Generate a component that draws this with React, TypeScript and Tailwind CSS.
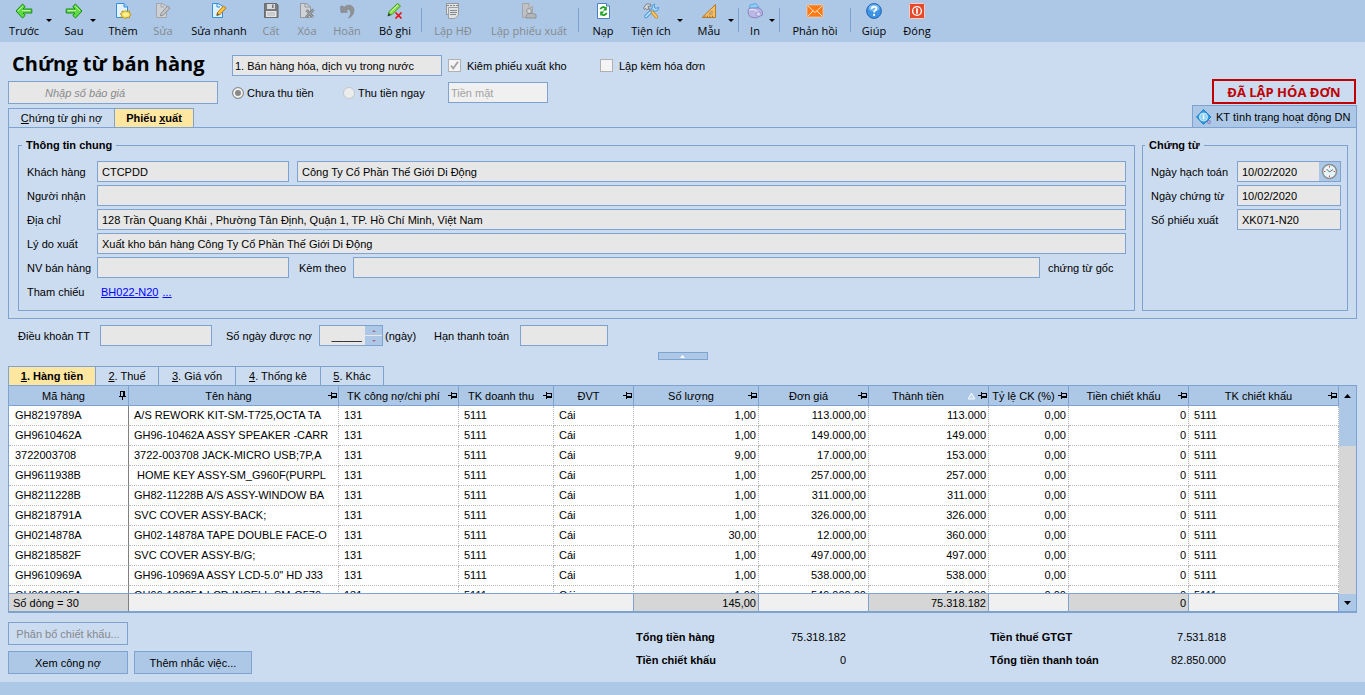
import type { ReactNode } from 'react'

type ToolItem =
  | { kind: 'button'; label: string; icon: ReactNode; width: string; disabled?: boolean }
  | { kind: 'caret'; label: string; width: string }
  | { kind: 'sep' }

type Column = {
  label: string
  width: string
  right?: boolean
  sorted?: boolean
}

function Icon({ children }: { children: ReactNode }) {
  return (
    <svg width="18" height="18" viewBox="0 0 18 18" aria-hidden="true">
      {children}
    </svg>
  )
}

const arrowPath = 'M1 9 L7.5 2 L10.2 4.6 L8 7 H16.8 V11 H8 L10.2 13.4 L7.5 16 Z'

const BackIcon = (
  <Icon>
    <path d={arrowPath} fill="#5fdc3f" stroke="#168a1b" strokeWidth="1" strokeLinejoin="round" />
    <path d="M3 9 L7.5 4.4 M7 8.6 H15.5" stroke="#c9fbb0" strokeWidth="1" fill="none" />
  </Icon>
)

const ForwardIcon = (
  <Icon>
    <g transform="matrix(-1 0 0 1 18 0)">
      <path d={arrowPath} fill="#5fdc3f" stroke="#168a1b" strokeWidth="1" strokeLinejoin="round" />
      <path d="M3 9 L7.5 4.4 M7 8.6 H15.5" stroke="#c9fbb0" strokeWidth="1" fill="none" />
    </g>
  </Icon>
)

const AddIcon = (
  <Icon>
    <path d="M2.5 1.5 H10 L13.5 5 V15.5 H2.5 Z" fill="#e4f3fd" stroke="#2f8fdb" />
    <path d="M10 1.5 V5 H13.5" fill="#9fd2f5" stroke="#2f8fdb" />
    <path d="M11.5 8.5 L13 9.4 L15.5 9 L15.4 11 L17.3 12.5 L15.4 14 L15.4 16 L12.8 15.6 L11 16.8 L9.6 15.4 L7 15.4 L7.8 13.2 L6.2 12 L8 10.8 L8 9 L10.3 9.4 Z" fill="#f2d64b" stroke="#b58a1a" strokeWidth="0.8" />
    <ellipse cx="11.8" cy="12.6" rx="3.2" ry="2.2" fill="#fff08c" />
  </Icon>
)

const EditOffIcon = (
  <Icon>
    <path d="M2.5 1.5 H8 L12.5 4 V15.5 H2.5 Z" fill="#cdd0d4" stroke="#a2a5a9" />
    <path d="M7 1.5 V5 H10" fill="none" stroke="#a2a5a9" />
    <path d="M7 11.5 L13.5 4 L16 6 L9.5 13 L6.5 13.8 Z" fill="#c3c5c8" stroke="#8b8e92" />
  </Icon>
)

const EditIcon = (
  <Icon>
    <path d="M2.5 1.5 H8 L12.5 4 V15.5 H2.5 Z" fill="#dff1fd" stroke="#2f8fdb" />
    <path d="M7 1.5 V5 H10" fill="none" stroke="#2f8fdb" />
    <path d="M7 11 L13.5 4 L16 6 L9.5 13 Z" fill="#ffc440" stroke="#b87512" />
    <path d="M7 11 L9.5 13 L6.3 13.9 Z" fill="#6b4a1d" />
  </Icon>
)

const SaveIcon = (
  <Icon>
    <path d="M2.5 1.5 H14.5 L16 3 V15.5 H2.5 Z" fill="#77797d" stroke="#696b6f" />
    <rect x="5" y="2" width="8" height="5" fill="#d8dadd" />
    <rect x="10" y="2.5" width="1.6" height="3.5" fill="#77797d" />
    <rect x="4" y="9" width="10.5" height="6" fill="#e3e5e7" />
    <path d="M5 11 H13 M5 13 H13" stroke="#a4a7aa" strokeWidth="0.8" />
  </Icon>
)

const DeleteIcon = (
  <Icon>
    <path d="M2.5 1.5 H8 L12.5 4.5 V15.5 H2.5 Z" fill="#cfd2d6" stroke="#96999d" />
    <path d="M7 1.5 V5 H12" fill="none" stroke="#96999d" />
    <path d="M8.5 8 L15 15 M15.5 7.5 L8 15.5" stroke="#7b7e82" strokeWidth="2.6" />
    <path d="M8.5 8 L15 15 M15.5 7.5 L8 15.5" stroke="#b6b9bd" strokeWidth="0.9" />
  </Icon>
)

const UndoIcon = (
  <Icon>
    <path d="M2.5 4.5 L5 4 L6 5.6 C9.5 1.2 16.2 3 16 8.6 C15.8 12.4 13.5 15 10.5 16 C12.6 13.4 13.2 11 12.4 9 C11.5 7 9.5 7 8.2 8.2 L9.6 10.2 L3 10.6 Z" fill="#909296" stroke="#7c7f83" strokeWidth="0.6" />
  </Icon>
)

const UnpostIcon = (
  <Icon>
    <path d="M2 13.5 L3.2 9.5 L11.5 1.5 L14.5 4 L6 12.5 Z" fill="#8be04a" stroke="#3d9c1f" />
    <path d="M4.5 10 L12 3" stroke="#dcfbb8" strokeWidth="1" />
    <path d="M1.5 14.5 L2.8 11 L4.8 13 Z" fill="#333" />
    <path d="M9.5 10.5 L15.5 16.5 M15.5 10.5 L9.5 16.5" stroke="#e81010" strokeWidth="1.7" />
  </Icon>
)

const InvoiceIcon = (
  <Icon>
    <rect x="2.5" y="1.5" width="12" height="11" fill="#e2e3e5" stroke="#94979b" />
    <path d="M3 3.5 H14" stroke="#808387" strokeDasharray="2 1" />
    <path d="M4.5 5.5 H14.5 V13 L11 16.5 H4.5 Z" fill="#e0e1e3" stroke="#9b9ea2" />
    <path d="M6 8.5 H13 M6 10.5 H13 M6 12.5 H12" stroke="#85888c" />
  </Icon>
)

const StockOutIcon = (
  <Icon>
    <path d="M2.5 1.5 H9 L12.5 5 V15.5 H2.5 Z" fill="#bfc1c4" stroke="#a2a5a9" />
    <path d="M9 1.5 V5 H12.5" fill="#dfe1e3" stroke="#9a9da1" />
    <circle cx="9" cy="9" r="2.4" fill="#d4d6d9" stroke="#909397" />
    <path d="M6 16 V13.5 Q9 10 16 12.5 V16 Z" fill="#b4b7ba" stroke="#909397" />
  </Icon>
)

const ReloadIcon = (
  <Icon>
    <path d="M3.5 1.5 H12.5 L15.5 4 V16.5 H3.5 Z" fill="#fff" stroke="#4d7fc4" />
    <path d="M12.5 1.5 V4 H15.5" fill="#b7d2f2" stroke="#4d7fc4" />
    <path d="M6.2 7 Q9 3.8 11.5 6" stroke="#16a321" strokeWidth="1.8" fill="none" />
    <path d="M12.8 4.3 V8.6 H8.8 Z" fill="#16a321" />
    <path d="M12.8 11.2 Q10 14.4 7.5 12.2" stroke="#16a321" strokeWidth="1.8" fill="none" />
    <path d="M6.2 13.9 V9.6 H10.2 Z" fill="#16a321" />
  </Icon>
)

const ToolsIcon = (
  <Icon>
    <path d="M4 14.5 L12 6.5" stroke="#2f8ad6" strokeWidth="3.4" strokeLinecap="round" />
    <path d="M4 14.5 L12 6.5" stroke="#b5defb" strokeWidth="1.8" strokeLinecap="round" />
    <path d="M12.5 2 L12 5 L13.5 6.5 L16.6 5.5 L15.8 8.4 L12.6 9.2 L10 6.4 L10.3 3.4 Z" fill="#b5defb" stroke="#2f8ad6" strokeWidth="0.8" />
    <path d="M6 6 L9.5 9.5" stroke="#8b8f94" strokeWidth="1.6" />
    <path d="M10.5 10.5 L14.5 14.8" stroke="#c78423" strokeWidth="3.4" strokeLinecap="round" />
    <path d="M10.5 10.5 L14.5 14.8" stroke="#ffcf6b" strokeWidth="1.8" strokeLinecap="round" />
    <path d="M1.5 6 L4.5 2 L8.5 2 L9 4 L6 4.5 L6.8 6.5 L4.8 7.8 L3.6 6.4 L2.4 7.4 Z" fill="#d5d8db" stroke="#6a6e73" strokeWidth="0.8" />
  </Icon>
)

const TemplateIcon = (
  <Icon>
    <path d="M15.5 2.5 V15.5 H2 Z" fill="#f3bf68" stroke="#b5792a" />
    <path d="M12 8.8 V12 H8.8 Z" fill="#cfe0f3" stroke="#b5792a" strokeWidth="0.8" />
    <path d="M5 15 V13.6 M7.5 15 V13.6 M10 15 V13.6 M12.5 15 V13.6" stroke="#8b5110" strokeWidth="0.7" />
  </Icon>
)

const PrintIcon = (
  <Icon>
    <path d="M3.5 6.5 L4 3 L10 1.5 L13 6 Z" fill="#8fd0f8" stroke="#4a9edc" strokeWidth="0.8" />
    <path d="M2 8 Q2.5 6 5 6 L13 6 Q16.5 7.5 16.5 10.5 V13 L10 16 L4.5 15 Q1.5 13 2 8 Z" fill="#bab7e4" stroke="#7b78b8" strokeWidth="0.8" />
    <path d="M3 8 Q8 6 12 10" stroke="#e4e2fa" strokeWidth="1.2" fill="none" />
    <ellipse cx="12.5" cy="12" rx="2.6" ry="2.2" fill="#d6d4f2" stroke="#8a87c4" strokeWidth="0.7" />
  </Icon>
)

const MailIcon = (
  <Icon>
    <rect x="1" y="3" width="16" height="12" fill="#ff7a14" stroke="#ffd9b5" strokeWidth="0.6" />
    <path d="M2 4 L9 10.5 L16 4 M2 14 L7 9 M16 14 L11 9" stroke="#ffe6d0" strokeWidth="1" fill="none" />
  </Icon>
)

const HelpIcon = (
  <Icon>
    <circle cx="9" cy="9" r="7.4" fill="#3d93e6" stroke="#1b5cab" strokeWidth="0.9" />
    <ellipse cx="9" cy="6" rx="5.4" ry="3.6" fill="#7dbbf3" />
    <path d="M6.6 7 Q6.8 4.6 9.1 4.6 Q11.5 4.7 11.4 6.8 Q11.2 8 9.9 8.7 Q9.1 9.2 9.1 10.6" stroke="#fff" strokeWidth="1.7" fill="none" />
    <circle cx="9.1" cy="12.9" r="1.1" fill="#fff" />
  </Icon>
)

const CloseIcon = (
  <Icon>
    <rect x="1.5" y="1.5" width="15" height="15" rx="1" fill="#e5482a" stroke="#f6cfc2" />
    <circle cx="9" cy="9" r="4.4" fill="none" stroke="#fff" strokeWidth="1.4" />
    <path d="M9 6.2 V11.8" stroke="#fff" strokeWidth="1.7" />
  </Icon>
)

const toolbar: ToolItem[] = [
  { kind: 'button', label: 'Trước', icon: BackIcon, width: 'w-[44px]' },
  { kind: 'caret', label: 'Trước', width: 'w-[12px]' },
  { kind: 'button', label: 'Sau', icon: ForwardIcon, width: 'w-[32px]' },
  { kind: 'caret', label: 'Sau', width: 'w-[17px]' },
  { kind: 'button', label: 'Thêm', icon: AddIcon, width: 'w-[32px]' },
  { kind: 'button', label: 'Sửa', icon: EditOffIcon, width: 'w-[48px]', disabled: true },
  { kind: 'button', label: 'Sửa nhanh', icon: EditIcon, width: 'w-[64px]' },
  { kind: 'button', label: 'Cất', icon: SaveIcon, width: 'w-[40px]', disabled: true },
  { kind: 'button', label: 'Xóa', icon: DeleteIcon, width: 'w-[32px]', disabled: true },
  { kind: 'button', label: 'Hoãn', icon: UndoIcon, width: 'w-[48px]', disabled: true },
  { kind: 'button', label: 'Bỏ ghi', icon: UnpostIcon, width: 'w-[48px]' },
  { kind: 'sep' },
  { kind: 'button', label: 'Lập HĐ', icon: InvoiceIcon, width: 'w-[58px]', disabled: true },
  { kind: 'button', label: 'Lập phiếu xuất', icon: StockOutIcon, width: 'w-[94px]', disabled: true },
  { kind: 'sep' },
  { kind: 'button', label: 'Nạp', icon: ReloadIcon, width: 'w-[44px]' },
  { kind: 'button', label: 'Tiện ích', icon: ToolsIcon, width: 'w-[52px]' },
  { kind: 'caret', label: 'Tiện ích', width: 'w-[13px]' },
  { kind: 'button', label: 'Mẫu', icon: TemplateIcon, width: 'w-[38px]' },
  { kind: 'caret', label: 'Mẫu', width: 'w-[8px]' },
  { kind: 'sep' },
  { kind: 'button', label: 'In', icon: PrintIcon, width: 'w-[28px]' },
  { kind: 'caret', label: 'In', width: 'w-[8px]' },
  { kind: 'sep' },
  { kind: 'button', label: 'Phản hồi', icon: MailIcon, width: 'w-[66px]' },
  { kind: 'sep' },
  { kind: 'button', label: 'Giúp', icon: HelpIcon, width: 'w-[42px]' },
  { kind: 'button', label: 'Đóng', icon: CloseIcon, width: 'w-[44px]' },
]

const columns: Column[] = [
  { label: 'Mã hàng', width: 'w-[120px]' },
  { label: 'Tên hàng', width: 'w-[210px]' },
  { label: 'TK công nợ/chi phí', width: 'w-[120px]' },
  { label: 'TK doanh thu', width: 'w-[95px]' },
  { label: 'ĐVT', width: 'w-[80px]' },
  { label: 'Số lượng', width: 'w-[125px]', right: true },
  { label: 'Đơn giá', width: 'w-[110px]', right: true },
  { label: 'Thành tiền', width: 'w-[120px]', right: true, sorted: true },
  { label: 'Tỷ lệ CK (%)', width: 'w-[80px]', right: true },
  { label: 'Tiền chiết khấu', width: 'w-[120px]', right: true },
  { label: 'TK chiết khấu', width: 'w-auto' },
]

// code, name, quantity, unit price, amount
const items: string[][] = [
  ['GH8219789A', 'A/S REWORK KIT-SM-T725,OCTA TA', '1,00', '113.000,00', '113.000'],
  ['GH9610462A', 'GH96-10462A ASSY SPEAKER -CARR', '1,00', '149.000,00', '149.000'],
  ['3722003708', '3722-003708 JACK-MICRO USB;7P,A', '9,00', '17.000,00', '153.000'],
  ['GH9611938B', ' HOME KEY ASSY-SM_G960F(PURPL', '1,00', '257.000,00', '257.000'],
  ['GH8211228B', 'GH82-11228B A/S ASSY-WINDOW BA', '1,00', '311.000,00', '311.000'],
  ['GH8218791A', 'SVC COVER ASSY-BACK;', '1,00', '326.000,00', '326.000'],
  ['GH0214878A', 'GH02-14878A TAPE DOUBLE FACE-O', '30,00', '12.000,00', '360.000'],
  ['GH8218582F', 'SVC COVER ASSY-B/G;', '1,00', '497.000,00', '497.000'],
  ['GH9610969A', 'GH96-10969A ASSY LCD-5.0" HD J33', '1,00', '538.000,00', '538.000'],
  ['GH9610225A', 'GH96-10225A LCD INCELL-SM-G570', '1,00', '549.000,00', '549.000'],
]

const totals = ['Số dòng = 30', '', '', '', '', '145,00', '', '75.318.182', '', '0', '']

const detailTabs = ['Hàng tiền', 'Thuế', 'Giá vốn', 'Thống kê', 'Khác']
const detailTabWidths = ['w-[87px]', 'w-[63px]', 'w-[77px]', 'w-[85px]', 'w-[63px]']

function Field({ id, value = '', className = '' }: { id: string; value?: string; className?: string }) {
  return (
    <input
      id={id}
      type="text"
      defaultValue={value}
      readOnly
      className={`h-[21px] min-w-0 border border-[#7ea3d0] bg-[#e7e7e7] px-1 text-black outline-none ${className}`}
    />
  )
}

function Cols() {
  return (
    <colgroup>
      {columns.map((column) => (
        <col key={column.label} className={column.width} />
      ))}
    </colgroup>
  )
}

function Pin({ vertical }: { vertical?: boolean }) {
  return (
    <svg
      width="9"
      height="9"
      viewBox="0 0 9 9"
      shapeRendering="crispEdges"
      aria-hidden="true"
      className={vertical ? 'shrink-0 -rotate-90' : 'shrink-0'}
    >
      <path d="M0 4h3v1H0z M3 1h1v7H3z M4 2h5v1H4z M4 5h5v2H4z M8 2h1v4H8z" fill="#000" />
    </svg>
  )
}

function Toolbar() {
  return (
    <nav className="flex h-[42px] shrink-0 bg-[#adc8e6] pl-[2px] font-['Open_Sans','Noto_Sans',sans-serif]">
      {toolbar.map((item, i) => {
        if (item.kind === 'sep') {
          return <span key={i} className="mx-[2px] mt-2 h-6 w-px bg-[#7ea3d0]" />
        }
        if (item.kind === 'caret') {
          return (
            <button key={i} type="button" aria-label={`${item.label}, tùy chọn`} className={`${item.width} flex h-10 items-center`}>
              <svg width="6" height="3" viewBox="0 0 6 3" aria-hidden="true">
                <path d="M0 0 H6 L3 3 Z" fill="#000" />
              </svg>
            </button>
          )
        }
        return (
          <button
            key={i}
            type="button"
            disabled={item.disabled}
            className={`${item.width} flex flex-col items-center whitespace-nowrap pt-[2px] disabled:text-[#84888e]`}
          >
            {item.icon}
            <span className="mt-[3px] leading-4">{item.label}</span>
          </button>
        )
      })}
    </nav>
  )
}

function Header() {
  return (
    <header className="flex shrink-0 justify-between pl-2 pr-[9px]">
      <div>
        <div className="flex h-[39px] items-end pb-[5px]">
          <h1 className="w-[224px] whitespace-nowrap pl-1 font-['Open_Sans','Noto_Sans',sans-serif] text-xl font-bold leading-6">
            Chứng từ bán hàng
          </h1>
          <select
            aria-label="Loại chứng từ"
            className="h-[21px] w-[210px] appearance-none border border-[#7ea3d0] bg-[#e7e7e7] pl-[2px] outline-none"
          >
            <option>1. Bán hàng hóa, dịch vụ trong nước</option>
          </select>
          <label className="ml-[6px] flex h-[21px] w-[152px] items-center gap-[6px]">
            <input
              type="checkbox"
              defaultChecked
              className="size-[13px] appearance-none border border-[#b0b0b0] bg-[#f4f4f4]"
            />
            <svg width="9" height="9" viewBox="0 0 9 9" aria-hidden="true" className="-ml-[17px] mr-[2px]">
              <path d="M1 4.5 L3.2 7.5 L8 0.8" stroke="#a3a3a3" strokeWidth="1.8" fill="none" />
            </svg>
            Kiêm phiếu xuất kho
          </label>
          <label className="flex h-[21px] items-center gap-[6px]">
            <input type="checkbox" className="size-[13px] appearance-none border border-[#b0b0b0] bg-[#f4f4f4]" />
            Lập kèm hóa đơn
          </label>
        </div>
        <div className="flex h-6 items-start">
          <input
            type="text"
            aria-label="Số báo giá"
            placeholder="Nhập số báo giá"
            className="h-[23px] w-[210px] border border-[#7ea3d0] bg-[#e7e7e7] pl-9 italic outline-none placeholder:text-[#8a8a8a]"
          />
          <label className="ml-[14px] flex h-[23px] w-[111px] items-center gap-[3px]">
            <input
              type="radio"
              name="payment"
              defaultChecked
              className="size-3 appearance-none rounded-full border border-[#8e8f8f] bg-[#8a8a8a] shadow-[inset_0_0_0_2px_#f0f0f0]"
            />
            Chưa thu tiền
          </label>
          <label className="flex h-[23px] w-[105px] items-center gap-[3px]">
            <input type="radio" name="payment" className="size-3 appearance-none rounded-full border border-[#c4c6c8] bg-[#ececec]" />
            Thu tiền ngay
          </label>
          <input
            type="text"
            aria-label="Phương thức thanh toán"
            defaultValue="Tiền mặt"
            disabled
            className="mt-px h-[21px] w-[100px] border border-[#7ea3d0] bg-[#f0f0f0] px-[2px] text-[#a3a3a3]"
          />
        </div>
      </div>
      <div className="flex flex-col justify-end pb-px">
        <strong className="flex h-[25px] w-[144px] items-center justify-center border-2 border-[#c00000] font-['Open_Sans','Noto_Sans',sans-serif] text-[13px] font-bold text-[#c00000]">
          ĐÃ LẬP HÓA ĐƠN
        </strong>
      </div>
    </header>
  )
}

function GeneralInfo() {
  return (
    <fieldset className="h-[173px] min-w-0 flex-1 border border-[#7ea3d0] px-2 pt-2">
      <legend className="-ml-[5px] h-[15px] px-1 font-bold leading-[15px]">Thông tin chung</legend>
      <div className="flex flex-col gap-[3px]">
        <div className="flex items-center">
          <label htmlFor="customer" className="w-[70px]">Khách hàng</label>
          <Field id="customer" value="CTCPDD" className="w-[192px]" />
          <input
            type="text"
            aria-label="Tên khách hàng"
            defaultValue="Công Ty Cổ Phần Thế Giới Di Động"
            readOnly
            className="ml-2 h-[21px] min-w-0 flex-1 border border-[#7ea3d0] bg-[#e7e7e7] px-1 outline-none"
          />
        </div>
        <div className="flex items-center">
          <label htmlFor="receiver" className="w-[70px]">Người nhận</label>
          <Field id="receiver" className="flex-1" />
        </div>
        <div className="flex items-center">
          <label htmlFor="address" className="w-[70px]">Địa chỉ</label>
          <Field id="address" className="flex-1" value="128 Trần Quang Khải , Phường Tân Định, Quận 1, TP. Hồ Chí Minh, Việt Nam" />
        </div>
        <div className="flex items-center">
          <label htmlFor="reason" className="w-[70px]">Lý do xuất</label>
          <Field id="reason" className="flex-1" value="Xuất kho bán hàng Công Ty Cổ Phần Thế Giới Di Động" />
        </div>
        <div className="flex items-center">
          <label htmlFor="seller" className="w-[70px] whitespace-nowrap">NV bán hàng</label>
          <Field id="seller" className="w-[192px]" />
          <label htmlFor="attached" className="ml-[10px] w-[54px]">Kèm theo</label>
          <Field id="attached" className="flex-1" />
          <span className="w-[86px] pl-2">chứng từ gốc</span>
        </div>
        <div className="flex h-[21px] items-center">
          <span className="w-[74px]">Tham chiếu</span>
          <a href="#BH022-N20" className="text-[#0000ff] underline">BH022-N20</a>
          <a href="#more" className="ml-1 text-[#0000ff] underline">...</a>
        </div>
      </div>
    </fieldset>
  )
}

function VoucherInfo() {
  return (
    <fieldset className="h-[173px] w-[206px] min-w-0 shrink-0 border border-[#7ea3d0] pl-2 pr-[6px] pt-2">
      <legend className="-ml-[6px] h-[15px] px-1 font-bold leading-[15px]">Chứng từ</legend>
      <div className="flex flex-col gap-[3px]">
        <div className="flex items-center">
          <label htmlFor="postedDate" className="w-[86px] whitespace-nowrap">Ngày hạch toán</label>
          <div className="flex h-[21px] min-w-0 flex-1 border border-[#7ea3d0] bg-[#e7e7e7]">
            <input id="postedDate" type="text" defaultValue="10/02/2020" className="w-0 flex-1 pl-1 outline-none" />
            <button type="button" aria-label="Chọn giờ" className="flex w-[21px] items-center justify-center bg-[#adc8e6]">
              <svg width="17" height="17" viewBox="0 0 17 17" aria-hidden="true">
                <circle cx="8.5" cy="8.5" r="7" fill="#e6f5f7" stroke="#8b9093" strokeWidth="1.6" />
                <path d="M5.5 6 L8.5 9 L12 6.5" stroke="#5d6f78" strokeWidth="1" fill="none" />
                <path d="M8 3h1v1.4H8z M8 12.6h1V14H8z M3 8h1.4v1H3z M12.6 8H14v1h-1.4z" fill="#e0452c" />
              </svg>
            </button>
          </div>
        </div>
        <div className="flex items-center">
          <label htmlFor="voucherDate" className="w-[86px]">Ngày chứng từ</label>
          <Field id="voucherDate" value="10/02/2020" className="flex-1" />
        </div>
        <div className="flex items-center">
          <label htmlFor="voucherNo" className="w-[86px]">Số phiếu xuất</label>
          <Field id="voucherNo" value="XK071-N20" className="flex-1" />
        </div>
      </div>
    </fieldset>
  )
}

function PaymentTerms() {
  return (
    <div className="flex h-[33px] shrink-0 items-center pl-[18px]">
      <label htmlFor="terms" className="w-[82px]">Điều khoản TT</label>
      <Field id="terms" className="w-[112px]" />
      <label htmlFor="creditDays" className="ml-[14px] w-[93px]">Số ngày được nợ</label>
      <div className="flex h-[21px] w-[64px] border border-[#7ea3d0] bg-[#e7e7e7]">
        <input id="creditDays" type="text" defaultValue="_____" className="w-0 flex-1 pr-[3px] text-right outline-none" />
        <div className="flex w-[17px] flex-col gap-px">
          <button type="button" aria-label="Tăng" className="flex flex-1 items-center justify-center bg-[#adc8e6]">
            <svg width="4" height="2" viewBox="0 0 4 2" aria-hidden="true"><path d="M0 2 L2 0 L4 2 Z" fill="#a5718f" /></svg>
          </button>
          <button type="button" aria-label="Giảm" className="flex flex-1 items-center justify-center bg-[#adc8e6]">
            <svg width="4" height="2" viewBox="0 0 4 2" aria-hidden="true"><path d="M0 0 H4 L2 2 Z" fill="#a5718f" /></svg>
          </button>
        </div>
      </div>
      <span className="ml-[2px] w-[49px]">(ngày)</span>
      <label htmlFor="dueDate" className="w-[86px]">Hạn thanh toán</label>
      <Field id="dueDate" className="w-[88px]" />
    </div>
  )
}

function ItemsGrid() {
  return (
    <div className="flex min-h-0 flex-1 border border-b-2 border-[#7ea3d0]">
      <div className="flex min-w-0 flex-1 flex-col">
        <div className="min-h-0 flex-1 overflow-hidden bg-white">
          <table className="w-full table-fixed border-separate border-spacing-0">
            <Cols />
            <thead>
              <tr>
                {columns.map((column, i) => (
                  <th key={column.label} className="h-5 border-b border-r border-[#7ea3d0] bg-[#adc8e6] p-0 font-normal">
                    <div className="flex items-center pr-px">
                      <span className="flex-1 whitespace-nowrap text-center">{column.label}</span>
                      {column.sorted && (
                        <svg width="9" height="8" viewBox="0 0 9 8" aria-hidden="true" className="mr-[2px]">
                          <path d="M4.5 1 L8 7 H1 Z" fill="#c9daef" stroke="#f4f8fc" />
                        </svg>
                      )}
                      <Pin vertical={i === 0} />
                    </div>
                  </th>
                ))}
              </tr>
            </thead>
            <tbody>
              {items.map(([code, name, quantity, price, amount]) => {
                const cells = [code, name, '131', '5111', 'Cái', quantity, price, amount, '0,00', '0', '5111']
                return (
                  <tr key={code}>
                    {cells.map((cell, i) => (
                      <td
                        key={i}
                        className={`h-5 overflow-hidden whitespace-pre border-b border-r border-dotted border-[#b8b8b8] py-0 leading-[15px] ${
                          columns[i].right ? 'pl-1 pr-[2px] text-right' : i === 0 ? 'pl-[6px] pr-0' : 'pl-[5px] pr-0'
                        } ${i === 0 ? 'border-r-[#808080] [border-right-style:solid]' : ''}`}
                      >
                        {cell}
                      </td>
                    ))}
                  </tr>
                )
              })}
            </tbody>
          </table>
        </div>
        <table className="w-full shrink-0 table-fixed border-separate border-spacing-0 border-t border-[#7ea3d0]">
          <Cols />
          <tbody>
            <tr>
              {totals.map((total, i) => (
                <td
                  key={i}
                  className={`h-[17px] whitespace-nowrap border-r py-0 leading-4 ${
                    columns[i].right ? 'pl-1 pr-[2px] text-right' : 'pl-1 pr-0'
                  } ${total ? 'bg-[#d6d6d6]' : 'bg-[#f0f0f0]'} ${
                    i === 0 ? 'border-[#808080]' : i < 4 ? 'border-[#f0f0f0]' : 'border-[#7ea3d0]'
                  }`}
                >
                  {total}
                </td>
              ))}
            </tr>
          </tbody>
        </table>
      </div>
      <div className="flex w-[17px] flex-col bg-[#d6d6d6]">
        <button type="button" aria-label="Cuộn lên" className="flex h-5 items-center justify-center bg-[#adc8e6]">
          <svg width="7" height="4" viewBox="0 0 7 4" aria-hidden="true"><path d="M0 4 L3.5 0 L7 4 Z" fill="#000" /></svg>
        </button>
        <div className="h-10 bg-[#adc8e6]" />
        <div className="flex-1" />
        <button type="button" aria-label="Cuộn xuống" className="flex h-[17px] items-center justify-center bg-[#adc8e6]">
          <svg width="7" height="4" viewBox="0 0 7 4" aria-hidden="true"><path d="M0 0 H7 L3.5 4 Z" fill="#000" /></svg>
        </button>
      </div>
    </div>
  )
}

function Summary() {
  return (
    <footer className="flex h-[69px] shrink-0 items-start px-2 pt-[9px]">
      <div className="grid w-[628px] grid-cols-[120px_118px] gap-[6px]">
        <button type="button" disabled className="col-span-2 h-[23px] w-[120px] border border-[#7ea3d0] text-[#84888e]">
          Phân bổ chiết khấu...
        </button>
        <button type="button" className="h-[23px] border border-[#7ea3d0] bg-[#adc8e6]">Xem công nợ</button>
        <button type="button" className="h-[23px] border border-[#7ea3d0] bg-[#adc8e6]">Thêm nhắc việc...</button>
      </div>
      <dl className="grid grid-cols-[130px_80px_144px_130px_106px] gap-y-[7px] pt-[7px] leading-4">
        <dt className="font-bold">Tổng tiền hàng</dt>
        <dd className="text-right">75.318.182</dd>
        <dt className="col-start-4 font-bold">Tiền thuế GTGT</dt>
        <dd className="text-right">7.531.818</dd>
        <dt className="font-bold">Tiền chiết khấu</dt>
        <dd className="text-right">0</dd>
        <dt className="col-start-4 font-bold">Tổng tiền thanh toán</dt>
        <dd className="text-right">82.850.000</dd>
      </dl>
    </footer>
  )
}

export default function App() {
  return (
    <div className="flex h-screen flex-col bg-[#ccdcf0] font-['Liberation_Sans',Arial,sans-serif] text-[11px] leading-4 text-black">
      <Toolbar />
      <Header />

      <main className="flex min-h-0 flex-1 flex-col">
        <div className="flex h-[22px] shrink-0 items-end justify-between px-2">
          <div role="tablist" className="flex h-[19px] border-l border-t border-[#7ea3d0]">
            <button type="button" role="tab" aria-selected="false" className="w-[106px] border-r border-[#7ea3d0]">
              <u>C</u>hứng từ ghi nợ
            </button>
            <button type="button" role="tab" aria-selected="true" className="w-[79px] border-r border-[#7ea3d0] bg-[#ffe6a1] font-bold">
              Phiếu <u>x</u>uất
            </button>
          </div>
          <button type="button" className="flex h-[22px] w-[165px] items-center gap-1 whitespace-nowrap border border-b-0 border-[#7ea3d0] bg-[#adc8e6] pl-[3px]">
            <svg width="16" height="16" viewBox="0 0 16 16" aria-hidden="true" className="shrink-0">
              <path d="M7.5 0.5 L15 8 L7.5 15.5 L0.5 8 Z" fill="#2a9be6" stroke="#1672b8" strokeWidth="0.8" strokeLinejoin="round" />
              <circle cx="7.5" cy="8" r="4" fill="#8fd0f5" stroke="#c9ebfc" />
              <path d="M6.8 7h1.6v3.2H6.8z M6.8 5.2h1.6v1.2H6.8z" fill="#fff" />
              <circle cx="13" cy="13" r="1.6" fill="#b7b0e0" stroke="#7f78bd" strokeWidth="0.8" />
            </svg>
            KT tình trạng hoạt động DN
          </button>
        </div>
        <section className="mx-2 flex h-[192px] shrink-0 gap-[7px] border border-[#7ea3d0] pl-[9px] pr-2 pt-[10px]">
          <GeneralInfo />
          <VoucherInfo />
        </section>
        <PaymentTerms />
        <button
          type="button"
          aria-label="Thu gọn"
          className="flex h-2 w-[50px] shrink-0 items-center justify-center self-center border border-[#7ea3d0] bg-[#adc8e6]"
        >
          <svg width="5" height="3" viewBox="0 0 5 3" aria-hidden="true"><path d="M0 3 L2.5 0 L5 3 Z" fill="#fff" /></svg>
        </button>
        <div className="mx-2 mt-[6px] flex min-h-0 flex-1 flex-col">
          <div role="tablist" className="flex h-[19px] shrink-0 border-l border-[#7ea3d0]">
            {detailTabs.map((tab, i) => (
              <button
                key={tab}
                type="button"
                role="tab"
                aria-selected={i === 0}
                className={`${detailTabWidths[i]} whitespace-nowrap border-r border-t border-[#7ea3d0] ${i === 0 ? 'bg-[#ffe6a1] font-bold' : ''}`}
              >
                <u>{i + 1}</u>. {tab}
              </button>
            ))}
          </div>
          <ItemsGrid />
        </div>
        <Summary />
      </main>
      <div className="h-[13px] shrink-0 bg-[#adc8e6]" />
    </div>
  )
}
